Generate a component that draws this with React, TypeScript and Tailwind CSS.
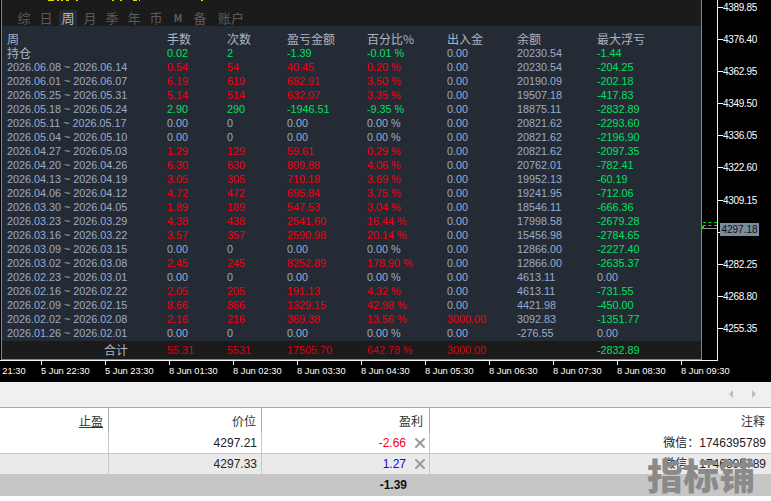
import { X } from "lucide-react";

const cols = "grid grid-cols-[160px_60px_60px_80px_80px_70px_80px_1fr]";

type Row = [string, string, string, string, string, string, string, string];

const rows: Row[] = [
  ["2026.06.08 ~ 2026.06.14", "0.54", "54", "40.45", "0.20 %", "0.00", "20230.54", "-204.25"],
  ["2026.06.01 ~ 2026.06.07", "6.19", "619", "682.91", "3.50 %", "0.00", "20190.09", "-202.18"],
  ["2026.05.25 ~ 2026.05.31", "5.14", "514", "632.07", "3.35 %", "0.00", "19507.18", "-417.83"],
  ["2026.05.18 ~ 2026.05.24", "2.90", "290", "-1946.51", "-9.35 %", "0.00", "18875.11", "-2832.89"],
  ["2026.05.11 ~ 2026.05.17", "0.00", "0", "0.00", "0.00 %", "0.00", "20821.62", "-2293.60"],
  ["2026.05.04 ~ 2026.05.10", "0.00", "0", "0.00", "0.00 %", "0.00", "20821.62", "-2196.90"],
  ["2026.04.27 ~ 2026.05.03", "1.29", "129", "59.61", "0.29 %", "0.00", "20821.62", "-2097.35"],
  ["2026.04.20 ~ 2026.04.26", "6.30", "630", "809.88", "4.06 %", "0.00", "20762.01", "-782.41"],
  ["2026.04.13 ~ 2026.04.19", "3.05", "305", "710.18", "3.69 %", "0.00", "19952.13", "-60.19"],
  ["2026.04.06 ~ 2026.04.12", "4.72", "472", "695.84", "3.75 %", "0.00", "19241.95", "-712.06"],
  ["2026.03.30 ~ 2026.04.05", "1.89", "189", "547.53", "3.04 %", "0.00", "18546.11", "-666.36"],
  ["2026.03.23 ~ 2026.03.29", "4.38", "438", "2541.60", "16.44 %", "0.00", "17998.58", "-2679.28"],
  ["2026.03.16 ~ 2026.03.22", "3.57", "357", "2590.98", "20.14 %", "0.00", "15456.98", "-2784.65"],
  ["2026.03.09 ~ 2026.03.15", "0.00", "0", "0.00", "0.00 %", "0.00", "12866.00", "-2227.40"],
  ["2026.03.02 ~ 2026.03.08", "2.45", "245", "8252.89", "178.90 %", "0.00", "12866.00", "-2635.37"],
  ["2026.02.23 ~ 2026.03.01", "0.00", "0", "0.00", "0.00 %", "0.00", "4613.11", "0.00"],
  ["2026.02.16 ~ 2026.02.22", "2.05", "205", "191.13", "4.32 %", "0.00", "4613.11", "-731.55"],
  ["2026.02.09 ~ 2026.02.15", "8.66", "866", "1329.15", "42.98 %", "0.00", "4421.98", "-450.00"],
  ["2026.02.02 ~ 2026.02.08", "2.16", "216", "369.38", "13.56 %", "3000.00", "3092.83", "-1351.77"],
  ["2026.01.26 ~ 2026.02.01", "0.00", "0", "0.00", "0.00 %", "0.00", "-276.55", "0.00"],
];

const tabs = ["综", "日", "周", "月", "季", "年", "币", "M", "备", "账户"];
const prices = ["4389.85", "4376.40", "4362.95", "4349.50", "4336.05", "4322.60", "4309.15", "4295.70", "4282.25", "4268.80", "4255.35"];
const times = ["5 Jun 21:30", "5 Jun 22:30", "5 Jun 23:30", "8 Jun 01:30", "8 Jun 02:30", "8 Jun 03:30", "8 Jun 04:30", "8 Jun 05:30", "8 Jun 06:30", "8 Jun 07:30", "8 Jun 08:30", "8 Jun 09:30"];

const muted = "text-[#9aaccc]";
const green = "text-[#00e060]";
const red = "text-[#f00010]";

// the whole row goes green or red with the sign of the profit
function tone(v: string, profit: string) {
  if (parseFloat(v) === 0) return muted;
  return parseFloat(profit) < 0 ? green : red;
}

export default function App() {
  return (
    <div className="relative w-[771px] h-[501px] overflow-hidden bg-white font-['Liberation_Sans','Noto_Sans_CJK_SC',sans-serif]">
      {/* chart */}
      <div className="h-[382px] bg-black relative overflow-hidden">
        <div className="flex h-[361px] w-[718px] border-b border-[#f0f0f0] border-r">
          {/* stats panel */}
          <div className="w-[701px] ml-[1px] h-[360px] flex flex-col border-x border-b border-[#7c8794] bg-[#1b1b1b]">
            <div className="h-[26px] flex items-end pl-[13px] text-[13px] text-[#5c5c5c] leading-[16px] font-['Noto_Sans_CJK_SC',sans-serif]">
              {tabs.map((t) => (
                <div
                  key={t}
                  className={
                    t === "周"
                      ? "w-[18px] mr-[4px] h-[16px] text-center rounded-t-[2px] bg-[#252b35] text-[#b4bcc8]"
                      : t === "M"
                        ? "w-[18px] mr-[4px] h-[16px] text-center text-[10px] font-bold text-[#606060]"
                        : t === "账户"
                          ? "ml-[5px] w-[26px] h-[16px] whitespace-nowrap"
                          : "w-[18px] mr-[4px] h-[16px] text-center"
                  }
                >
                  {t}
                </div>
              ))}
            </div>
            <div className="h-[315px] bg-[#252b35] pl-[5px] text-[10.8px] leading-[14px] pt-[6px]">
              <div className={`${cols} text-[12px] text-[#aab4c4] h-[13px] leading-[13px] font-['Noto_Sans_CJK_SC',sans-serif]`}>
                <div>周</div>
                <div>手数</div>
                <div>次数</div>
                <div>盈亏金额</div>
                <div>百分比%</div>
                <div>出入金</div>
                <div>余额</div>
                <div>最大浮亏</div>
              </div>
              <div className={`${cols} h-[14px] mt-[1px]`}>
                <div className="text-[12px] text-[#aab4c4] font-['Noto_Sans_CJK_SC',sans-serif]">持仓</div>
                <div className={green}>0.02</div>
                <div className={green}>2</div>
                <div className={green}>-1.39</div>
                <div className={green}>-0.01 %</div>
                <div className={muted}>0.00</div>
                <div className={muted}>20230.54</div>
                <div className={green}>-1.44</div>
              </div>
              {rows.map((r) => (
                <div key={r[0]} className={`${cols} h-[14px]`}>
                  <div className={`${muted} whitespace-nowrap`}>{r[0]}</div>
                  <div className={tone(r[1], r[3])}>{r[1]}</div>
                  <div className={tone(r[2], r[3])}>{r[2]}</div>
                  <div className={tone(r[3], r[3])}>{r[3]}</div>
                  <div className={tone(r[4], r[3])}>{r[4]}</div>
                  <div className={parseFloat(r[5]) > 0 ? red : muted}>{r[5]}</div>
                  <div className={muted}>{r[6]}</div>
                  <div className={r[7] === "0.00" ? muted : green}>{r[7]}</div>
                </div>
              ))}
            </div>
            <div className={`${cols} flex-1 pl-[5px] items-center text-[10.8px] text-[#dc0010]`}>
              <div className="text-right pr-[39px] text-[12px] text-[#aab4c4] font-['Noto_Sans_CJK_SC',sans-serif]">合计</div>
              <div>55.31</div>
              <div>5531</div>
              <div>17505.70</div>
              <div>642.78 %</div>
              <div>3000.00</div>
              <div></div>
              <div className={green}>-2832.89</div>
            </div>
          </div>
        </div>

        {/* clipped yellow label along the top edge */}
        <svg className="absolute left-[48px] top-0" width="160" height="2" viewBox="0 0 160 2">
          <path d="M0 0.5h6M9 0.5h2M13 0.5h2M18 0.5h3M28 0.5h2M64 0.5h2M72 0.5h2M85 0.5h4M91 0.5h1M153 0.5h2" stroke="#e8d800" strokeWidth="1" fill="none" />
        </svg>

        {/* price axis */}
        <div className="absolute left-[718px] top-[3px] flex flex-col text-[10px] leading-[10px] text-white">
          {prices.map((p) => (
            <div key={p} className="h-[32.1px] flex items-start">
              <div className="w-[5px] h-px bg-white mt-[4px]" />
              <div className="tracking-[-0.3px]">{p}</div>
            </div>
          ))}
        </div>
        <div className="absolute left-[703px] top-[222px] w-[14px] border-t border-dashed border-[#00e000]" />
        <div className="absolute left-[703px] top-[225px] w-[14px] border-t border-dashed border-[#00e000]" />
        <div className="absolute left-[702px] top-[228px] w-[15px] h-px bg-[#8a96a4]" />
        <div className="absolute left-[702px] top-[226px] w-[2px] h-[3px] bg-[#00e000]" />
        <div className="absolute left-[720px] top-[223px] w-[39px] h-[13px] bg-[#7b8c9e] text-[10px] leading-[13px] text-[#101010] text-center">
          4297.18
        </div>

        {/* time axis */}
        <div className="flex -ml-[23px] text-[9.3px] leading-[12px] text-white">
          {times.map((t) => (
            <div key={t} className="w-[64px] shrink-0">
              <div className="w-px h-[4px] bg-white" />
              <div className="whitespace-nowrap">{t}</div>
            </div>
          ))}
        </div>
      </div>

      {/* toolbox */}
      <div className="h-[26px] bg-[#f0f0f0] border-b border-[#a8a8a8] flex items-center justify-end gap-[17px] pr-[14px] pb-[2px]">
        <svg width="6" height="8" viewBox="0 0 6 8"><polygon points="5,0 5,8 1,4" fill="#bdbdbd" /></svg>
        <svg width="6" height="8" viewBox="0 0 6 8"><polygon points="1,0 1,8 5,4" fill="#bdbdbd" /></svg>
      </div>
      <div className="grid grid-cols-[109px_153px_168px_1fr] h-[25px] bg-white text-[12px] text-[#333] leading-[25px] text-right font-['Noto_Sans_CJK_SC',sans-serif]">
        <div className="pr-[5px] border-r border-[#a8a8a8]"><span className="underline">止盈</span></div>
        <div className="pr-[5px] border-r border-[#a8a8a8]">价位</div>
        <div className="pr-[6px] border-r border-[#a8a8a8]">盈利</div>
        <div className="pr-[6px]">注释</div>
      </div>
      <div className="grid grid-cols-[109px_153px_168px_1fr] h-[21px] bg-white border-b border-[#c8c8c8] text-[12px] leading-[20px] text-right text-[#222]">
        <div className="border-r border-[#c8c8c8]" />
        <div className="pr-[4px] border-r border-[#c8c8c8]">4297.21</div>
        <div className="pr-px border-r border-[#c8c8c8] flex items-center justify-end gap-[6px]">
          <span className="text-[#f00020]">-2.66</span>
          <X size={16} strokeWidth={3} className="text-[#999]" />
        </div>
        <div className="pr-[5px]">微信：1746395789</div>
      </div>
      <div className="grid grid-cols-[109px_153px_168px_1fr] h-[20px] bg-[#eaeaea] text-[12px] leading-[20px] text-right text-[#222]">
        <div className="border-r border-[#c8c8c8]" />
        <div className="pr-[4px] border-r border-[#c8c8c8]">4297.33</div>
        <div className="pr-px border-r border-[#c8c8c8] flex items-center justify-end gap-[6px]">
          <span className="text-[#2000f0]">1.27</span>
          <X size={16} strokeWidth={3} className="text-[#999]" />
        </div>
        <div className="pr-[5px]">微信：1746395789</div>
      </div>
      <div className="grid grid-cols-[109px_153px_168px_1fr] h-[22px] bg-[#c6c6c6] text-[12px] font-bold leading-[22px] text-right text-[#111]">
        <div />
        <div />
        <div className="pr-[23px]">-1.39</div>
        <div />
      </div>

      {/* watermark */}
      <div className="absolute left-[647px] top-[453px] text-[36px] leading-[42px] font-black text-[#8a8a8a] whitespace-nowrap font-['Noto_Sans_CJK_SC',sans-serif]">
        指标铺
      </div>
    </div>
  );
}
